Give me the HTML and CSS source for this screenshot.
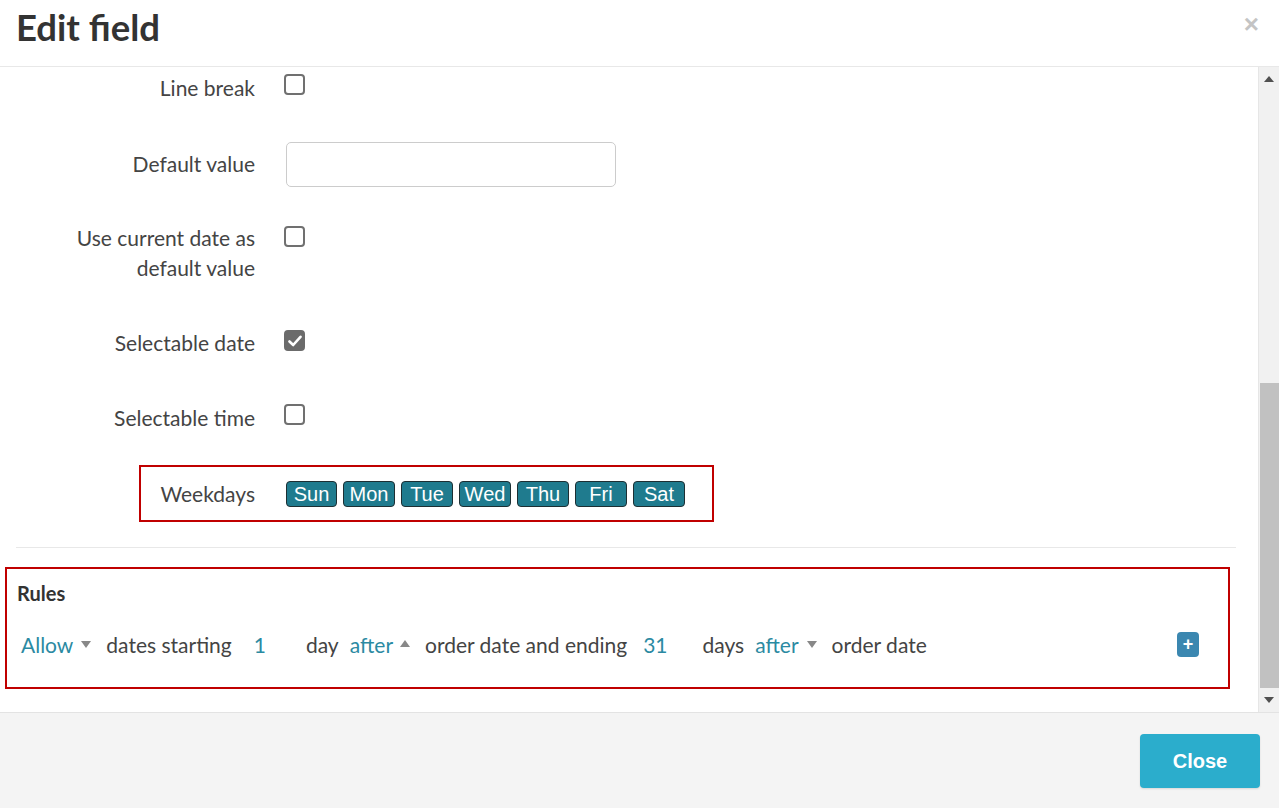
FILE: index.html
```html
<!DOCTYPE html>
<html>
<head>
<meta charset="utf-8">
<link rel="stylesheet" href="styles.css">
</head>
<body>
<div class="modal">
  <div class="header">
    <h1 class="title">Edit field</h1>
    <span class="close-x">&#215;</span>
  </div>
  <div class="main">
    <div class="content">
      <div class="row r1">
        <div class="label">Line break</div>
        <span class="cb"></span>
      </div>
      <div class="row r2">
        <div class="label lh44">Default value</div>
        <input class="text-input" type="text">
      </div>
      <div class="row r3">
        <div class="label">Use current date as<br>default value</div>
        <span class="cb cb3"></span>
      </div>
      <div class="row r4">
        <div class="label">Selectable date</div>
        <span class="cb checked"><svg width="14" height="12" viewBox="0 0 14 12"><path d="M1.5 6.5 L5.2 10 L12.5 1.8" fill="none" stroke="#fff" stroke-width="2.6" stroke-linecap="round" stroke-linejoin="round"/></svg></span>
      </div>
      <div class="row r5">
        <div class="label">Selectable time</div>
        <span class="cb"></span>
      </div>
      <div class="weekdays">
        <div class="wlabel">Weekdays</div>
        <div class="days">
          <span class="day first">Sun</span>
          <span class="day">Mon</span>
          <span class="day">Tue</span>
          <span class="day">Wed</span>
          <span class="day">Thu</span>
          <span class="day">Fri</span>
          <span class="day">Sat</span>
        </div>
      </div>
      <div class="sep"></div>
      <div class="rules">
        <div class="rules-title">Rules</div>
        <div class="rule-line">
          <span class="link l-allow">Allow</span><span class="tri down"></span>
          <span class="txt t-dates">dates starting</span>
          <span class="link n1">1</span>
          <span class="txt t-day">day</span>
          <span class="link l-after">after</span><span class="tri up"></span>
          <span class="txt t-order">order date and ending</span>
          <span class="link n31">31</span>
          <span class="txt t-days">days</span>
          <span class="link l-after">after</span><span class="tri down"></span>
          <span class="txt t-order2">order date</span>
          <span class="spacer"></span>
          <span class="plus">+</span>
        </div>
      </div>
    </div>
    <div class="scrollbar">
      <div class="arrow arrow-up"></div>
      <div class="track"><div class="thumb"></div></div>
      <div class="arrow arrow-down"></div>
    </div>
  </div>
  <div class="footer">
    <button class="close-btn">Close</button>
  </div>
</div>
</body>
</html>
```

FILE: styles.css
```css
html, body {
  margin: 0;
  padding: 0;
  background: #fff;
}
.modal {
  width: 1279px;
  height: 808px;
  display: flex;
  flex-direction: column;
  font-family: Lato, "Open Sans", sans-serif;
  color: #444;
  overflow: hidden;
}
.header {
  height: 66px;
  border-bottom: 1px solid #e8e8e8;
  display: flex;
  justify-content: space-between;
  align-items: flex-start;
  box-sizing: content-box;
  flex: none;
}
.title {
  margin: 5px 0 0 16px;
  font-size: 36.5px;
  font-weight: 700;
  color: #333;
  line-height: 44px;
}
.close-x {
  margin: 6px 20px 0 0;
  font-family: "Liberation Sans", Arial, sans-serif;
  font-size: 26px;
  font-weight: 700;
  color: #c4c4c4;
  line-height: 36px;
}
.main {
  flex: 1;
  display: flex;
  min-height: 0;
}
.content {
  flex: 1;
  min-width: 0;
}
.row {
  display: flex;
  align-items: flex-start;
}
.label {
  width: 255px;
  text-align: right;
  font-size: 21px;
  line-height: 30px;
  color: #444;
  flex: none;
}
.lh44 {
  line-height: 44px;
}
.r1 { margin-top: 6px; height: 30px; }
.r2 { margin-top: 39px; height: 44px; }
.r3 { margin-top: 37px; height: 60px; }
.r4 { margin-top: 45px; height: 30px; }
.r5 { margin-top: 45px; height: 30px; }
.cb {
  width: 21px;
  height: 21px;
  box-sizing: border-box;
  border: 2px solid #707070;
  border-radius: 4px;
  margin: 1px 0 0 29px;
  display: flex;
  align-items: center;
  justify-content: center;
  flex: none;
}
.cb3 { margin-top: 3px; }
.cb.checked {
  background: #6b6b6b;
  border-color: #6b6b6b;
  margin-top: 2px;
}
.text-input {
  margin: 0 0 0 31px;
  width: 330px;
  height: 45px;
  box-sizing: border-box;
  border: 1px solid #ccc;
  border-radius: 5px;
  padding: 0;
  background: #fff;
}
.weekdays {
  margin: 32px 0 0 139px;
  width: 575px;
  height: 57px;
  box-sizing: border-box;
  border: 2px solid #c00000;
  display: flex;
  align-items: center;
}
.wlabel {
  width: 114px;
  text-align: right;
  font-size: 21px;
  color: #444;
  flex: none;
}
.days {
  display: flex;
  gap: 6px;
  margin-left: 31px;
  margin-top: 1px;
}
.day {
  width: 52px;
  height: 26px;
  box-sizing: border-box;
  background: #1f7b8e;
  border: 1px solid #1d2f33;
  border-radius: 4px;
  color: #fff;
  font-family: "Liberation Sans", Arial, sans-serif;
  font-size: 20px;
  line-height: 24px;
  text-align: center;
}
.day.first { width: 51px; }
.sep {
  margin: 25px 22px 0 16px;
  border-top: 1px solid #e8e8e8;
}
.rules {
  margin: 19px 0 0 5px;
  width: 1225px;
  height: 122px;
  box-sizing: border-box;
  border: 2px solid #c00000;
  padding: 0 0 0 10px;
}
.rules-title {
  font-weight: 700;
  font-size: 20px;
  color: #333;
  margin-top: 12px;
  line-height: 24px;
}
.rule-line {
  display: flex;
  align-items: center;
  margin-top: 25px;
  height: 28px;
  font-size: 21px;
  white-space: nowrap;
  padding-right: 29px;
}
.link {
  color: #2b8aa2;
}
.txt {
  color: #444;
}
.l-allow { margin-left: 4px; }
.tri {
  width: 0;
  height: 0;
  border-left: 5px solid transparent;
  border-right: 5px solid transparent;
  margin-left: 8px;
}
.tri.down { border-top: 7px solid #888; }
.tri.up { border-bottom: 7px solid #888; margin-left: 7px; margin-top: -2px; }
.t-dates { margin-left: 15px; }
.n1 { margin-left: 22px; }
.t-day { margin-left: 40px; }
.l-after { margin-left: 11px; }
.t-order { margin-left: 15px; }
.n31 { margin-left: 16px; }
.t-days { margin-left: 35px; }
.t-order2 { margin-left: 15px; }
.spacer { flex: 1; }
.plus {
  width: 22px;
  height: 25px;
  background: #3b87b0;
  border-radius: 4px;
  color: #fff;
  font-family: "Liberation Sans", Arial, sans-serif;
  font-weight: 700;
  font-size: 18px;
  line-height: 24px;
  text-align: center;
}
.scrollbar {
  width: 21px;
  flex: none;
  background: #f1f1f1;
  display: flex;
  flex-direction: column;
  border-left: 1px solid #e6e6e6;
  box-sizing: border-box;
}
.arrow {
  height: 24px;
  display: flex;
  align-items: center;
  justify-content: center;
  flex: none;
}
.arrow-up::after {
  content: "";
  border-left: 5px solid transparent;
  border-right: 5px solid transparent;
  border-bottom: 6px solid #505050;
}
.arrow-down::after {
  content: "";
  border-left: 5px solid transparent;
  border-right: 5px solid transparent;
  border-top: 6px solid #505050;
}
.track {
  flex: 1;
  display: flex;
  flex-direction: column;
  justify-content: flex-end;
}
.thumb {
  height: 305px;
  margin-left: 1px;
  background: #c1c1c1;
}
.footer {
  height: 95px;
  flex: none;
  background: #f4f4f4;
  border-top: 1px solid #e3e3e3;
  display: flex;
  justify-content: flex-end;
  align-items: flex-start;
}
.close-btn {
  margin: 21px 19px 0 0;
  width: 120px;
  height: 54px;
  background: #2badcc;
  border: none;
  border-radius: 4px;
  color: #fff;
  font-family: "Liberation Sans", Arial, sans-serif;
  font-weight: 700;
  font-size: 20px;
  box-shadow: 0 1px 2px rgba(0,0,0,0.12);
}
```
